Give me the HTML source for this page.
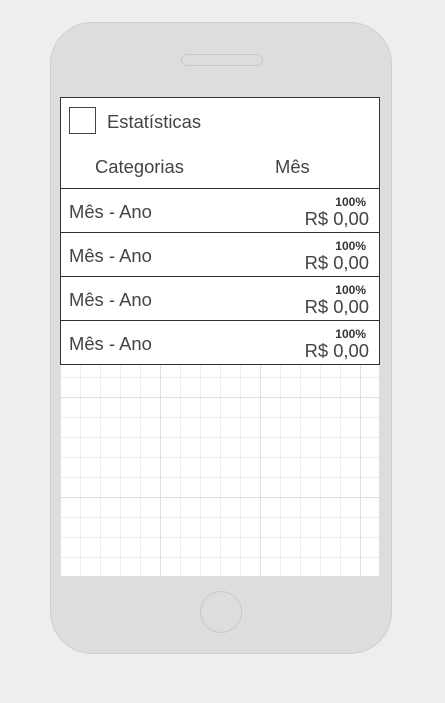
<!DOCTYPE html>
<html><head><meta charset="utf-8"><style>
*{margin:0;padding:0;box-sizing:border-box}
body{width:445px;height:703px;background:#eeeeee;position:relative;overflow:hidden;font-family:"Liberation Sans",sans-serif;color:#444}
.phone{position:absolute;left:50px;top:22px;width:342px;height:632px;background:#dddddd;border:1px solid #cfcfcf;border-radius:42px}
.speaker{position:absolute;left:181px;top:54px;width:82px;height:12px;border:1px solid #c8c8c8;border-radius:6px}
.home{position:absolute;left:200px;top:591px;width:42px;height:42px;border:1px solid #c8c8c8;border-radius:50%}
.screen{position:absolute;left:60px;top:97px;width:320px;height:480px;background-color:#fff;
background-image:
linear-gradient(to right,#e0e0e0 1px,transparent 1px),
linear-gradient(to bottom,#e0e0e0 1px,transparent 1px),
linear-gradient(to right,#ececec 1px,transparent 1px),
linear-gradient(to bottom,#ececec 1px,transparent 1px);
background-size:100px 100px,100px 100px,20px 20px,20px 20px;border-right:1px solid #ddd;border-bottom:1px solid #ddd}
.panel{position:absolute;left:60px;top:97px;width:320px;height:268px;background:#fff;border:1px solid #333}
.cb{position:absolute;left:69px;top:107px;width:27px;height:27px;border:1px solid #444}
.t{position:absolute;font-size:18.4px;white-space:nowrap}
.sep{position:absolute;left:60px;width:320px;height:1px;background:#333}
.pct{position:absolute;right:79px;font-size:12px;font-weight:bold;color:#333}
.val{position:absolute;right:76px;font-size:18.4px}
</style></head><body>
<div class="phone"></div>
<div class="speaker"></div>
<div class="home"></div>
<div class="screen"></div>
<div class="panel"></div>
<div class="cb"></div>
<div class="t" style="left:107px;top:111px">Estatísticas</div>
<div class="t" style="left:95px;top:156px">Categorias</div>
<div class="t" style="left:275px;top:156px">Mês</div>
<div class="sep" style="top:188px"></div>
<div class="sep" style="top:232px"></div>
<div class="sep" style="top:276px"></div>
<div class="sep" style="top:320px"></div>

<div class="t" style="left:69px;top:201px">Mês - Ano</div>
<div class="pct" style="top:195px">100%</div>
<div class="val" style="top:208px">R$ 0,00</div>

<div class="t" style="left:69px;top:245px">Mês - Ano</div>
<div class="pct" style="top:239px">100%</div>
<div class="val" style="top:252px">R$ 0,00</div>

<div class="t" style="left:69px;top:289px">Mês - Ano</div>
<div class="pct" style="top:283px">100%</div>
<div class="val" style="top:296px">R$ 0,00</div>

<div class="t" style="left:69px;top:333px">Mês - Ano</div>
<div class="pct" style="top:327px">100%</div>
<div class="val" style="top:340px">R$ 0,00</div>
</body></html>
